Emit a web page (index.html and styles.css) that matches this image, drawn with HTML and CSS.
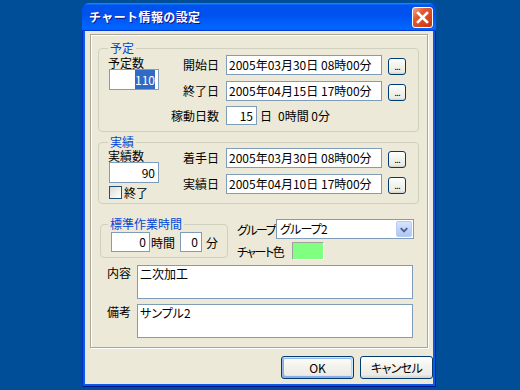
FILE: index.html
```html
<!DOCTYPE html>
<html lang="ja">
<head>
<meta charset="utf-8">
<title>チャート情報の設定</title>
<link rel="stylesheet" href="styles.css">
</head>
<body>
<div class="window">
  <div class="titlebar">
    <span class="title">チャート情報の設定</span>
    <span class="close" aria-label="閉じる">
      <svg width="19" height="19" viewBox="0 0 19 19">
        <path d="M5 5 L14 14 M14 5 L5 14" stroke="#fff" stroke-width="2.6" stroke-linecap="square" fill="none"/>
      </svg>
    </span>
  </div>
  <div class="client">
    <div class="panel">
      <fieldset class="group g-plan">
        <legend>予定</legend>
        <div class="fgrid plan-grid">
          <div class="leftcol">
            <div class="lbl">予定数</div>
            <div class="tb num"><span class="hl">110</span></div>
          </div>
          <div class="rlabel">開始日</div>
          <div class="tb date">2005年03月30日 08時00分</div>
          <div class="dotcell"><button class="btn dots">...</button></div>
          <div class="rlabel">終了日</div>
          <div class="tb date">2005年04月15日 17時00分</div>
          <div class="dotcell"><button class="btn dots">...</button></div>
          <div class="rlabel short">稼動日数</div>
          <div class="days">
            <div class="tb days-in">15</div><span class="unit">日</span><span class="dur">0時間 0分</span>
          </div>
        </div>
      </fieldset>

      <fieldset class="group g-act">
        <legend>実績</legend>
        <div class="fgrid act-grid">
          <div class="leftcol">
            <div class="lbl">実績数</div>
            <div class="tb num">90</div>
            <div class="check-row"><span class="checkbox"></span><span class="check-lbl">終了</span></div>
          </div>
          <div class="rlabel">着手日</div>
          <div class="tb date">2005年03月30日 08時00分</div>
          <div class="dotcell"><button class="btn dots">...</button></div>
          <div class="rlabel">実績日</div>
          <div class="tb date">2005年04月10日 17時00分</div>
          <div class="dotcell"><button class="btn dots">...</button></div>
        </div>
      </fieldset>

      <div class="bottom-grid">
        <fieldset class="group g-std">
          <legend>標準作業時間</legend>
          <div class="std-row">
            <div class="tb hours">0</div><span class="u-hours">時間</span>
            <div class="tb mins">0</div><span class="u-mins">分</span>
          </div>
        </fieldset>
        <div class="side">
          <div class="row-group">
            <span class="side-lbl lbl-group">グループ</span>
            <div class="combo">
              <span class="combo-text">グループ2</span>
              <span class="combo-btn">
                <svg width="15" height="15" viewBox="0 0 15 15"><path d="M4 6 L7.5 9.5 L11 6" stroke="#4D6185" stroke-width="2" fill="none"/></svg>
              </span>
            </div>
          </div>
          <div class="row-color">
            <span class="side-lbl lbl-color">チャート色</span>
            <span class="swatch"></span>
          </div>
        </div>
      </div>

      <div class="notes">
        <div class="note-lbl">内容</div>
        <div class="ta">二次加工</div>
        <div class="note-lbl">備考</div>
        <div class="ta">サンプル2</div>
      </div>
    </div>

    <div class="actions">
      <button class="btn push default">OK</button>
      <button class="btn push kana">キャンセル</button>
    </div>
  </div>
</div>
</body>
</html>
```

FILE: styles.css
```css
* { box-sizing: border-box; }
html, body { margin: 0; padding: 0; }
body {
  width: 520px;
  height: 390px;
  overflow: hidden;
  background: #004E98;
  font-family: "Noto Sans CJK JP", "Noto Sans", sans-serif;
  font-size: 12px;
  color: #000;
  font-feature-settings: "palt";
}

.window {
  margin: 3px 0 0 82px;
  width: 354px;
  height: 384px;
  display: flex;
  flex-direction: column;
  background: #0A5AE6;
  border-radius: 7px 7px 0 0;
  box-shadow: inset 1px 0 #0032C8, inset -1px 0 #00209E, inset 0 -1px #00138C;
}

.titlebar {
  height: 28px;
  flex: none;
  display: flex;
  align-items: flex-start;
  padding: 0 3px 0 7px;
  border-radius: 7px 7px 0 0;
  background: linear-gradient(180deg, #0997FF, #0053EE 8%, #0050EE 40%, #0066FF 88%, #0066FF 93%, #005BFF 95%, #003DD7 96%, #003DD7);
}
.title {
  margin-top: 6px;
  line-height: 16px;
  font-size: 12px;
  font-weight: bold;
  color: #fff;
  letter-spacing: 0.4px;
  text-shadow: 1px 1px #0F1089;
  font-feature-settings: normal;
}
.close {
  margin-left: auto;
  margin-top: 4px;
  width: 21px;
  height: 21px;
  border: 1px solid #fff;
  border-radius: 3px;
  background: linear-gradient(135deg, #F4A88C 0%, #E2592F 35%, #D4451C 70%, #C23A12 100%);
  display: flex;
  align-items: center;
  justify-content: center;
}
.close svg { display: block; }

.client {
  flex: 1;
  margin: 0 3px 3px;
  background: #ECE9D8;
  padding-top: 3px;
  display: flex;
  flex-direction: column;
}

.panel {
  margin: 0 5px;
  height: 314px;
  border: 1px solid #ACA899;
  box-shadow: 1px 1px 0 #fff, inset 1px 1px 0 #fff;
}

/* group boxes */
.group {
  border: 1px solid #D0D0BF;
  border-radius: 4px;
  margin: 0;
  padding: 0;
  min-width: 0;
}
.group legend {
  color: #0046D5;
  padding: 0 2px;
  margin-left: 9px;
  font-size: 12px;
  line-height: 12px;
}
.g-plan { margin: 7px 0 0 7px; width: 321px; }
.g-act { margin: 4px 0 0 7px; width: 321px; }

.fgrid {
  display: grid;
  grid-template-columns: 51px 67px 156px 24px;
  align-items: start;
}
.plan-grid { padding: 1px 0 6px 9px; grid-template-rows: 26px 25px 19px; }
.act-grid { padding: 0 0 4px 9px; grid-template-rows: 26px auto; }
.leftcol { grid-column: 1; grid-row: 1 / 4; }
.act-grid .leftcol { grid-row: 1 / 3; }

.lbl { line-height: 12px; height: 14px; padding-top: 2px; white-space: nowrap; }
.rlabel {
  text-align: right;
  padding-right: 7px;
  line-height: 20px;
  white-space: nowrap;
}
.rlabel.short { line-height: 19px; }

/* text boxes */
.tb {
  border: 1px solid #7F9DB9;
  background: #fff;
  height: 20px;
  line-height: 18px;
  padding: 0 2px;
  white-space: nowrap;
  overflow: hidden;
}
.tb.num {
  width: 50px;
  height: 21px;
  line-height: 19px;
  margin-left: 1px;
  text-align: right;
  padding-right: 3px;
}
.hl { background: #316AC5; color: #fff; padding: 1px 0; }
.tb.date { width: 156px; }

.dotcell { display: flex; justify-content: flex-end; }
.btn {
  font-family: inherit;
  font-feature-settings: inherit;
  color: #000;
  border: 1px solid #003C74;
  border-radius: 3px;
  background: linear-gradient(180deg, #FFFFFF 0%, #F4F3EE 40%, #ECEBE6 85%, #D6D0C5 100%);
  padding: 0;
  margin: 0;
}
.dots {
  width: 18px;
  height: 17px;
  margin-top: 3px;
  font-size: 10px;
  line-height: 10px;
  display: flex;
  align-items: flex-end;
  justify-content: center;
  padding-bottom: 3px;
  letter-spacing: -1px;
}

.days { display: flex; align-items: center; height: 19px; }
.tb.days-in { width: 31px; height: 19px; line-height: 17px; text-align: right; padding-right: 3px; }
.unit { margin-left: 3px; }
.dur { margin-left: 6px; }

.check-row { display: flex; align-items: center; margin-top: 3px; height: 13px; }
.checkbox {
  width: 13px;
  height: 13px;
  margin-left: 1px;
  border: 1px solid #1C5180;
  background: linear-gradient(135deg, #DCDCD7 0%, #F2F2EE 60%, #FFFFFF 100%);
}
.check-lbl { margin-left: 2px; line-height: 13px; }

/* bottom part */
.bottom-grid {
  margin: 14px 0 0 9px;
  height: 42px;
  display: grid;
  grid-template-columns: 128px auto;
  column-gap: 9px;
  align-items: start;
}
.g-std { width: 128px; }
.g-std legend { margin-left: 7px; }
.std-row { display: flex; align-items: center; padding: 2px 0 5px 10px; }
.tb.hours { width: 39px; text-align: right; padding-right: 3px; }
.u-hours { margin-left: 1px; }
.tb.mins { width: 22px; margin-left: 5px; text-align: right; padding-right: 3px; }
.u-mins { margin-left: 4px; }

.side { padding-top: 1px; }
.row-group { display: flex; align-items: center; height: 20px; }
.side-lbl { white-space: nowrap; letter-spacing: -1.5px; }
.lbl-group { width: 39px; }
.combo {
  width: 138px;
  height: 20px;
  border: 1px solid #7F9DB9;
  background: #fff;
  display: flex;
  align-items: center;
}
.combo-text { flex: 1; padding-left: 3px; line-height: 18px; letter-spacing: -0.8px; }
.combo-btn {
  width: 16px;
  height: 16px;
  margin-right: 1px;
  border: 1px solid #B8CCF2;
  border-radius: 2px;
  background: linear-gradient(180deg, #D8E5FD 0%, #C1D3FB 50%, #AFC6F6 100%);
  display: flex;
  align-items: center;
  justify-content: center;
}
.combo-btn svg { display: block; }
.row-color { display: flex; align-items: center; height: 18px; margin-top: 3px; }
.lbl-color { width: 55px; }
.swatch {
  width: 32px;
  height: 18px;
  background: #80FF80;
  border: 1px solid;
  border-color: #A0A0A0 #FFFFFF #FFFFFF #A0A0A0;
}

.notes {
  margin: 5px 0 0 16px;
  display: grid;
  grid-template-columns: 30px 276px;
  row-gap: 5px;
}
.note-lbl { padding-top: 1px; line-height: 14px; }
.ta {
  height: 34px;
  border: 1px solid #7F9DB9;
  background: #fff;
  padding: 1px 2px;
  line-height: 14px;
}

.actions {
  display: flex;
  justify-content: flex-end;
  gap: 6px;
  margin-top: 8px;
}
.push {
  width: 73px;
  height: 23px;
  font-size: 12px;
  line-height: 21px;
  text-align: center;
}
.push.kana { letter-spacing: -0.6px; }
.push.default {
  box-shadow: inset -1px 1px #CEE7FF, inset 1px 2px #98B8EA, inset -2px 2px #BCD4F6, inset 1px -1px #89ADE4, inset 2px -2px #89ADE4;
}
```
